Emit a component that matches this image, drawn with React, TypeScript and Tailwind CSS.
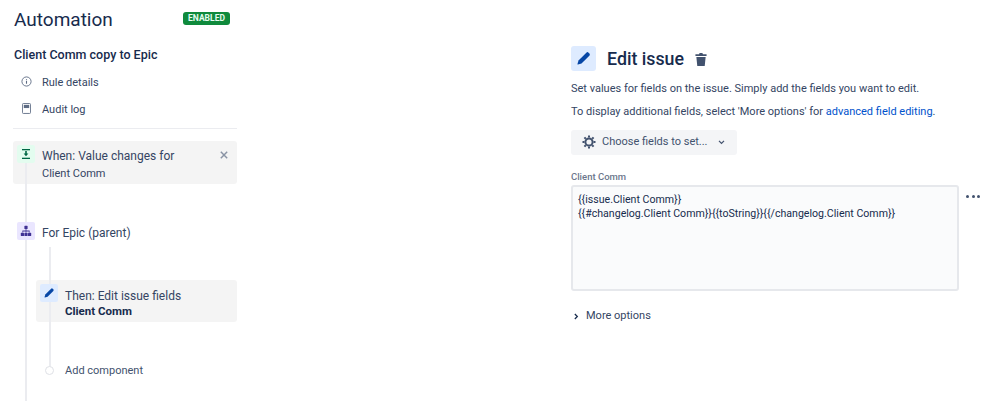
import React from 'react';

const font = { fontFamily: 'Roboto, sans-serif' };

function PencilIcon({ className }: { className: string }) {
  return (
    <svg viewBox="0 0 24 24" className={className} fill="currentColor">
      <path d="M15.6 4.6a2 2 0 0 1 2.8 0l1 1a2 2 0 0 1 0 2.8L9.5 18.3 5 19.6a.5.5 0 0 1-.6-.6l1.3-4.5z" />
    </svg>
  );
}

function SideLink({ icon, label }: { icon: React.ReactNode; label: string }) {
  return (
    <div className="flex h-[27px] items-center text-[11px] text-[#344563]">
      <div className="flex w-[29px] justify-center pl-[5px] pr-[8px] text-[#5e6c84]">{icon}</div>
      <span className="mt-[4px]">{label}</span>
    </div>
  );
}

function IconTile({ className, children }: { className: string; children: React.ReactNode }) {
  return (
    <div className={`z-10 flex h-[18px] w-[18px] shrink-0 items-center justify-center rounded-[2px] ${className}`}>
      {children}
    </div>
  );
}

function Sidebar() {
  return (
    <div className="relative flex h-[401px] w-[224px] shrink-0 flex-col">
      <div className="flex h-[44px] items-center justify-between pr-[7px] pb-[5px]">
        <h1 className="ml-[1px] text-[19px] leading-[24px] text-[#172b4d]">Automation</h1>
        <span className="mb-[3px] flex h-[13px] w-[47px] items-center justify-center rounded-[3px] bg-[#0f8a3c] text-[8.5px] font-bold text-[#e3fcef]">
          ENABLED
        </span>
      </div>
      <div className="mt-[2px] ml-[1px] text-[12.5px] leading-[18px] font-medium text-[#172b4d]">Client Comm copy to Epic</div>
      <div className="mt-[4px]">
        <SideLink
          label="Rule details"
          icon={
            <svg viewBox="0 0 12 12" className="h-[11px] w-[11px]" fill="none" stroke="currentColor">
              <circle cx="6" cy="6" r="5" />
              <path d="M6 5.2v3.2M6 3.2v1" strokeWidth="1.2" />
            </svg>
          }
        />
        <SideLink
          label="Audit log"
          icon={
            <svg viewBox="0 0 10 12" className="h-[11px] w-[9px]">
              <rect x="0.5" y="0.5" width="9" height="11" rx="1" fill="none" stroke="currentColor" />
              <rect x="2" y="2" width="6" height="3.5" fill="currentColor" />
            </svg>
          }
        />
      </div>
      <div className="mt-[6px] h-px bg-[#ebecf0]" />

      <div className="mt-[12px] flex h-[43px] rounded-[3px] bg-[#f4f4f4] pt-[4px] pl-[4px]">
        <IconTile className="bg-[#e3fcef] text-[#006644]">
          <svg viewBox="0 0 12 12" className="h-[12px] w-[12px]" fill="currentColor">
            <rect x="2" y="1" width="8" height="1.3" />
            <rect x="2" y="9.7" width="8" height="1.3" />
            <path d="M5.2 3h1.6v2.4H8.4L6 8.2 3.6 5.4h1.6z" />
          </svg>
        </IconTile>
        <div className="ml-[7px] flex-1 pt-[3px] text-[12px] leading-[17px] text-[#344563]">
          <div>When: Value changes for</div>
          <div className="text-[11px]">Client Comm</div>
        </div>
        <svg viewBox="0 0 10 10" className="mt-[6px] mr-[9px] h-[8px] w-[8px] text-[#8993a4]" stroke="currentColor" strokeWidth="1.8">
          <path d="M1 1l8 8M9 1l-8 8" />
        </svg>
      </div>

      <div className="mt-[38px] flex h-[18px] items-center pl-[4px]">
        <IconTile className="bg-[#eae6ff] text-[#403294]">
          <svg viewBox="0 0 12 12" className="h-[12px] w-[12px]" fill="currentColor">
            <rect x="4.4" y="0.8" width="3.2" height="3.2" rx="0.6" />
            <path d="M5.6 4h.8v1.6h3.2v2h-.8V6.4H6.4v1.2h-.8V6.4H3.2v1.2h-.8v-2h3.2z" />
            <rect x="0.8" y="7.8" width="3.2" height="3.2" rx="0.6" />
            <rect x="4.4" y="7.8" width="3.2" height="3.2" rx="0.6" />
            <rect x="8" y="7.8" width="3.2" height="3.2" rx="0.6" />
          </svg>
        </IconTile>
        <span className="mt-[3px] ml-[7px] text-[12px] text-[#344563]">For Epic (parent)</span>
      </div>

      <div className="mt-[40px] ml-[23px] flex h-[42px] rounded-[3px] bg-[#f4f4f4] pt-[4px] pl-[4px]">
        <IconTile className="bg-[#deebff] text-[#0747a6]">
          <PencilIcon className="h-[14px] w-[14px]" />
        </IconTile>
        <div className="ml-[7px] pt-[4px] text-[12px] leading-[16px] text-[#344563]">
          <div>Then: Edit issue fields</div>
          <div className="-mt-[1px] text-[11.5px] font-bold text-[#172b4d]">Client Comm</div>
        </div>
      </div>

      <div className="mt-[38px] ml-[32px] flex h-[20px] items-center">
        <div className="z-10 h-[9px] w-[9px] rounded-full border border-[#dfe1e6] bg-white" />
        <span className="mt-[3px] ml-[11px] text-[11px] text-[#42526e]">Add component</span>
      </div>

      {/* tree connectors */}
      <div className="absolute top-[163px] bottom-0 left-[12px] w-[2px] bg-[#ebecf0]" />
      <div className="absolute top-[247px] left-[36px] h-[120px] w-[2px] bg-[#ebecf0]" />
    </div>
  );
}

function Editor() {
  return (
    <div className="ml-[334px] flex-1 pt-[46px]">
      <div className="flex items-center">
        <div className="flex h-[25px] w-[25px] items-center justify-center rounded-[3px] bg-[#deebff] text-[#0747a6]">
          <PencilIcon className="h-[19px] w-[19px]" />
        </div>
        <h2 className="ml-[11px] text-[17.8px] leading-[25px] font-medium text-[#172b4d]">Edit issue</h2>
        <svg viewBox="0 0 12 14" className="mt-[1px] ml-[11px] h-[13px] w-[12px] text-[#42526e]" fill="currentColor">
          <path d="M4.5 0h3l.6 1.4H12v1.8H0V1.4h3.9zM1 4.2h10L10 14H2z" />
        </svg>
      </div>
      <p className="mt-[9px] text-[11px] leading-[17px] text-[#344563]">
        Set values for fields on the issue. Simply add the fields you want to edit.
      </p>
      <p className="mt-[6px] text-[11px] leading-[17px] text-[#344563]">
        To display additional fields, select 'More options' for <span className="text-[#0052cc]">advanced field editing</span>.
      </p>
      <div className="mt-[10px] flex h-[25px] w-[166px] items-center rounded-[3px] bg-[#f4f5f7] pl-[11px] text-[11px] text-[#42526e]">
        <svg viewBox="0 0 14 14" className="mb-[1px] h-[14px] w-[14px]" fill="none" stroke="currentColor">
          <circle cx="7" cy="7" r="3.6" strokeWidth="2" />
          <path d="M7 0.5v2M7 11.5v2M0.5 7h2M11.5 7h2M2.4 2.4l1.4 1.4M10.2 10.2l1.4 1.4M2.4 11.6l1.4-1.4M10.2 3.8l1.4-1.4" strokeWidth="2" />
        </svg>
        <span className="ml-[6px]">Choose fields to set...</span>
        <svg viewBox="0 0 8 6" className="ml-[10px] h-[5px] w-[7px]" fill="none" stroke="currentColor" strokeWidth="1.5">
          <path d="M1 1l3 3 3-3" />
        </svg>
      </div>
      <div className="mt-[15px] text-[9.5px] leading-[14px] font-medium text-[#6b778c]">Client Comm</div>
      <div className="flex items-start">
        <div className="mt-[1px] h-[106px] w-[388px] rounded-[3px] border-2 border-[#e6e8ec] bg-[#fafbfc] pt-[6px] pl-[5px] text-[10.6px] leading-[14px] text-[#172b4d]">
          <div>{'{{issue.Client Comm}}'}</div>
          <div>{'{{#changelog.Client Comm}}{{toString}}{{/changelog.Client Comm}}'}</div>
        </div>
        <div className="mt-[11px] ml-[7px] flex gap-[2.5px]">
          <span className="h-[3px] w-[3px] rounded-full bg-[#42526e]" />
          <span className="h-[3px] w-[3px] rounded-full bg-[#42526e]" />
          <span className="h-[3px] w-[3px] rounded-full bg-[#42526e]" />
        </div>
      </div>
      <div className="mt-[17px] flex items-center text-[11px] text-[#344563]">
        <svg viewBox="0 0 6 8" className="ml-[3px] h-[7px] w-[5px] text-[#172b4d]" fill="none" stroke="currentColor" strokeWidth="1.5">
          <path d="M1 1l3 3-3 3" />
        </svg>
        <span className="ml-[7px]">More options</span>
      </div>
    </div>
  );
}

export default function App() {
  return (
    <div className="flex h-[401px] w-[999px] overflow-hidden bg-white pl-[13px]" style={font}>
      <Sidebar />
      <Editor />
    </div>
  );
}
